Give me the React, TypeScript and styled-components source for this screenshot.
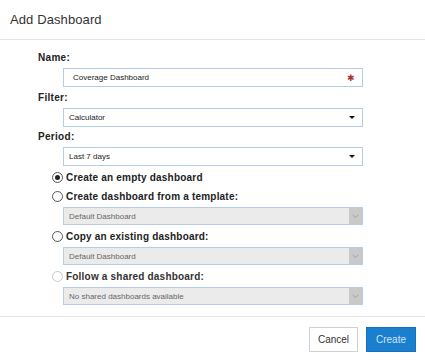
import React from "react";
import styled, { createGlobalStyle } from "styled-components";

const Global = createGlobalStyle`
  html, body { margin: 0; padding: 0; background: #fff; }
  body { font-family: "Liberation Sans", Arial, sans-serif; color: #333; }
  * { box-sizing: border-box; }
`;

const Dialog = styled.div`
  width: 425px;
  height: 361px;
  display: flex;
  flex-direction: column;
  background: #fff;
`;

const Header = styled.div`
  height: 40px;
  display: flex;
  align-items: center;
  padding-left: 10px;
  border-bottom: 1px solid #e5e5e5;
`;

const Title = styled.h1`
  margin: 0;
  font-size: 13px;
  font-weight: normal;
  color: #333;
  letter-spacing: 0.1px;
`;

const Body = styled.div`
  flex: 1;
  padding: 12px 0 0 38px;
  display: flex;
  flex-direction: column;
`;

const Label = styled.div<{ $top?: number }>`
  height: 12px;
  line-height: 12px;
  font-size: 10px;
  font-weight: bold;
  color: #222;
  margin-top: ${(p) => p.$top ?? 0}px;
  margin-bottom: 4px;
  letter-spacing: 0.3px;
`;

const Field = styled.div<{ $disabled?: boolean; $h?: number; $pad?: number }>`
  margin-left: 25px;
  width: 300px;
  height: ${(p) => p.$h ?? 19}px;
  border: 1px solid #b5cde9;
  background: ${(p) => (p.$disabled ? "#ebebeb" : "#fff")};
  display: flex;
  align-items: center;
  padding-left: ${(p) => p.$pad ?? 5}px;
  font-size: 8px;
  color: ${(p) => (p.$disabled ? "#666" : "#222")};
  position: relative;
`;

const FieldText = styled.span`
  flex: 1;
`;

const Star = styled.span`
  color: #a83232;
  font-size: 9px;
  line-height: 1;
  margin-right: 7px;
  margin-top: 1px;
`;

const Caret = styled.span`
  width: 0;
  height: 0;
  border-left: 3.5px solid transparent;
  border-right: 3.5px solid transparent;
  border-top: 3.5px solid #111;
  margin-right: 7px;
`;

const DisabledButton = styled.div`
  width: 13px;
  align-self: stretch;
  background: #c9c9c9;
  display: flex;
  align-items: center;
  justify-content: center;
`;

const RadioRow = styled.label<{ $disabled?: boolean }>`
  height: 19px;
  display: flex;
  align-items: center;
  margin-left: 14px;
  gap: 3px;
  font-size: 10px;
  font-weight: bold;
  color: ${(p) => (p.$disabled ? "#333" : "#222")};
  letter-spacing: 0.2px;
`;

const Radio = styled.span<{ $checked?: boolean; $disabled?: boolean }>`
  width: 11px;
  height: 11px;
  border-radius: 50%;
  border: 1px solid ${(p) => (p.$disabled ? "#c8c8c8" : "#555")};
  background: #fff;
  display: flex;
  align-items: center;
  justify-content: center;
  &::after {
    content: "";
    width: 5px;
    height: 5px;
    border-radius: 50%;
    background: #222;
    display: ${(p) => (p.$checked ? "block" : "none")};
  }
`;

const SubField = styled(Field)`
  margin-top: 1px;
  margin-bottom: 2px;
  padding-right: 0;
`;

const Footer = styled.div`
  height: 45px;
  border-top: 1px solid #e5e5e5;
  display: flex;
  justify-content: flex-end;
  align-items: flex-start;
  padding: 10px 9px 0 0;
  gap: 8px;
`;

const Button = styled.button<{ $primary?: boolean }>`
  height: 25px;
  width: ${(p) => (p.$primary ? 50 : 49)}px;
  font-family: "Liberation Sans", Arial, sans-serif;
  font-size: 10px;
  border: 1px solid ${(p) => (p.$primary ? "#1671bd" : "#d0d0d0")};
  background: ${(p) => (p.$primary ? "#1a7fce" : "#fff")};
  color: ${(p) => (p.$primary ? "#cfe3f6" : "#333")};
  padding: 0;
  cursor: pointer;
`;

const Chevron = () => (
  <svg width="7" height="5" viewBox="0 0 7 5">
    <path d="M0.8 1 L3.5 3.6 L6.2 1" fill="none" stroke="#9a9a9a" strokeWidth="0.8" />
  </svg>
);

const DisabledSelect = ({ text }: { text: string }) => (
  <SubField $disabled $h={18}>
    <FieldText>{text}</FieldText>
    <DisabledButton>
      <Chevron />
    </DisabledButton>
  </SubField>
);

export default function App() {
  return (
    <>
      <Global />
      <Dialog>
        <Header>
          <Title>Add Dashboard</Title>
        </Header>
        <Body>
          <Label>Name:</Label>
          <Field $pad={9}>
            <FieldText>Coverage Dashboard</FieldText>
            <Star>✱</Star>
          </Field>
          <Label $top={5}>Filter:</Label>
          <Field>
            <FieldText>Calculator</FieldText>
            <Caret />
          </Field>
          <Label $top={4}>Period:</Label>
          <Field>
            <FieldText>Last 7 days</FieldText>
            <Caret />
          </Field>
          <RadioRow style={{ marginTop: 2 }}>
            <Radio $checked />
            Create an empty dashboard
          </RadioRow>
          <RadioRow>
            <Radio />
            Create dashboard from a template:
          </RadioRow>
          <DisabledSelect text="Default Dashboard" />
          <RadioRow>
            <Radio />
            Copy an existing dashboard:
          </RadioRow>
          <DisabledSelect text="Default Dashboard" />
          <RadioRow $disabled>
            <Radio $disabled />
            Follow a shared dashboard:
          </RadioRow>
          <DisabledSelect text="No shared dashboards available" />
        </Body>
        <Footer>
          <Button>Cancel</Button>
          <Button $primary>Create</Button>
        </Footer>
      </Dialog>
    </>
  );
}
